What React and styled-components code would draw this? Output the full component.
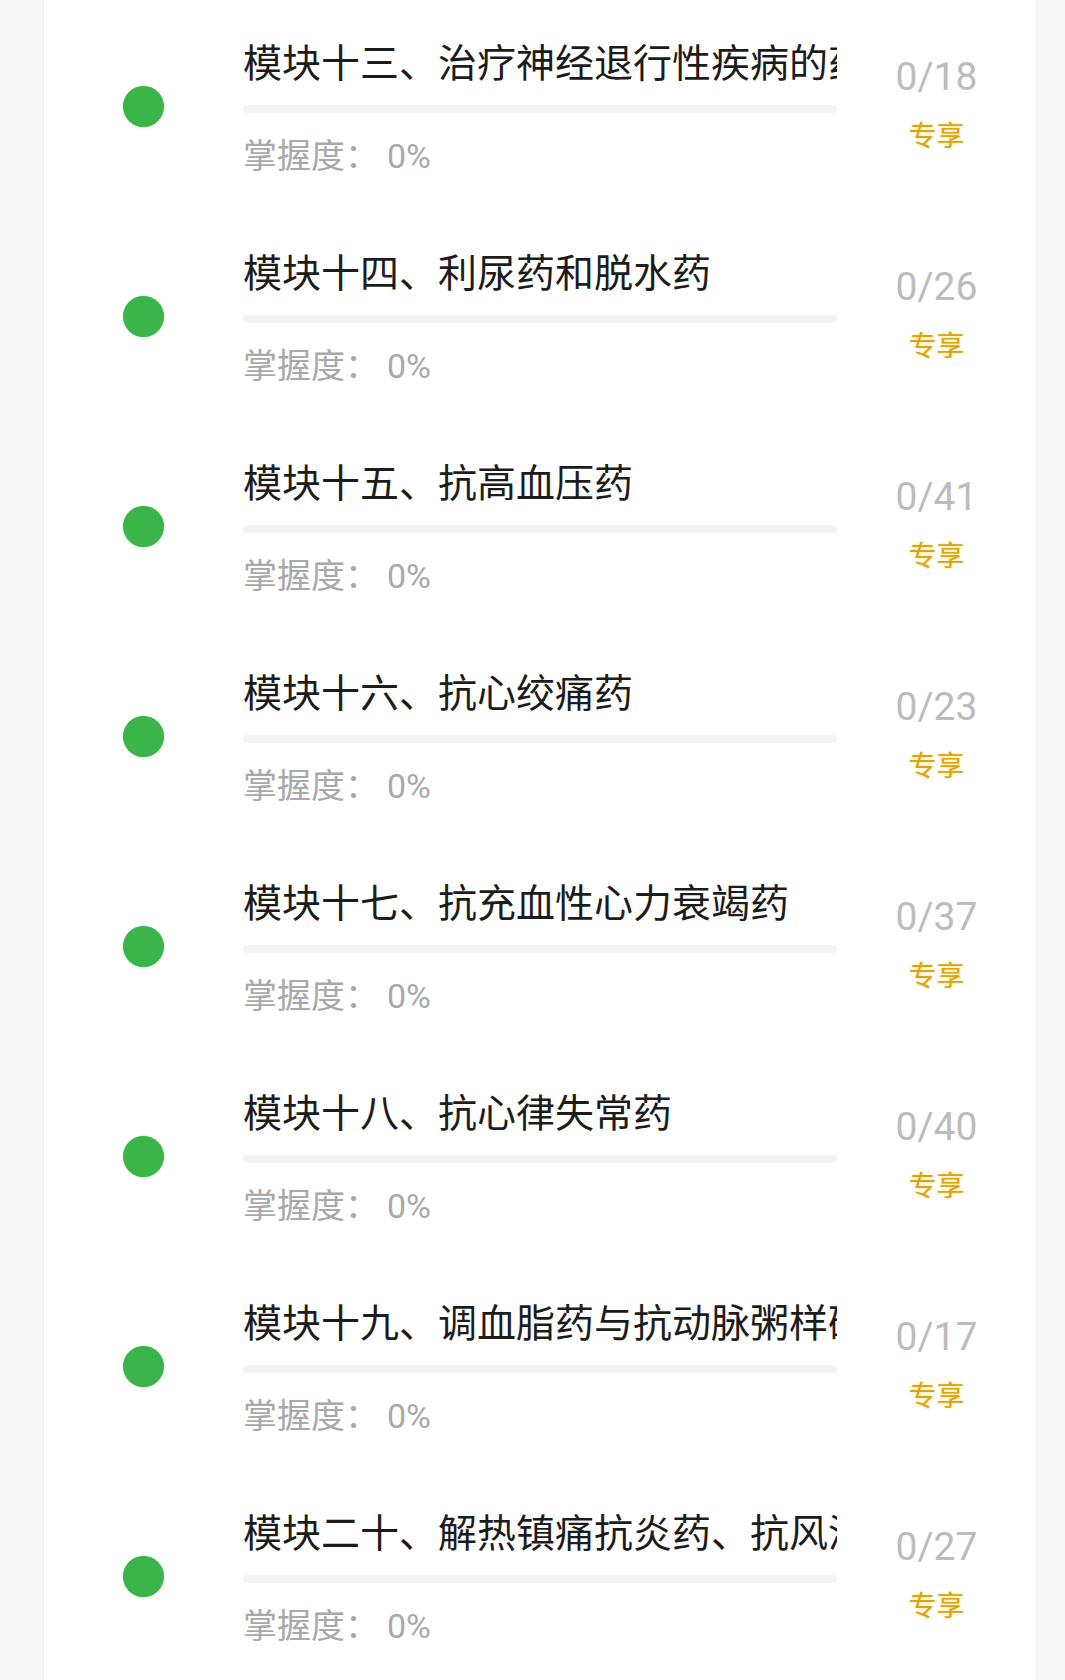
import React from 'react';
import styled, { createGlobalStyle } from 'styled-components';

const GlobalStyle = createGlobalStyle`
  html, body {
    margin: 0;
    padding: 0;
    background: #f8f8f8;
  }
  body {
    font-family: "Roboto", "Noto Sans CJK SC", sans-serif;
    overflow: hidden;
  }
`;

const Page = styled.div`
  height: 1680px;
  overflow: hidden;
`;

const Card = styled.div`
  margin-left: 44px;
  width: 992px;
  min-height: 1680px;
  background: #fff;
  box-shadow: -2px 0 3px rgba(0, 0, 0, 0.035), 2px 0 3px rgba(0, 0, 0, 0.02);
  padding-top: 1px;
  box-sizing: border-box;
`;

const Row = styled.div`
  display: grid;
  grid-template-columns: 41px 594px 1fr;
  column-gap: 79px;
  padding-left: 79px;
  height: 210px;
`;

const Dot = styled.span`
  align-self: center;
  width: 41px;
  height: 41px;
  border-radius: 50%;
  background: #3bb54a;
  box-shadow: 0 0 1px #5fd36a;
`;

const Content = styled.div`
  display: flex;
  flex-direction: column;
  padding-top: 40px;
  min-width: 0;
`;

const Title = styled.div`
  font-size: 39px;
  line-height: 46px;
  color: #1c1c1c;
  white-space: nowrap;
  overflow: hidden;
`;

const Bar = styled.div`
  margin-top: 18px;
  height: 8px;
  border-radius: 4px;
  background: #f4f4f4;
  overflow: hidden;
`;

const Fill = styled.div`
  height: 100%;
  background: #3bb54a;
`;

const Mastery = styled.div`
  margin-top: 24px;
  font-size: 34px;
  line-height: 38px;
  color: #a9a9a9;
  white-space: nowrap;
`;

const Percent = styled.span`
  margin-left: 8px;
`;

const Side = styled.div`
  display: flex;
  flex-direction: column;
  align-items: center;
  padding-top: 53px;
  margin-left: -79px;
`;

const Count = styled.div`
  font-size: 39px;
  line-height: 46px;
  color: #bcbcbc;
`;

const Tag = styled.div`
  margin-top: 20px;
  font-size: 28px;
  line-height: 34px;
  color: #d9a41a;
  text-shadow: 0 0 3px #ffe680, 0 0 1px #fff2b0;
`;

const modules = [
  { title: '模块十三、治疗神经退行性疾病的药物', done: 0, total: 18 },
  { title: '模块十四、利尿药和脱水药', done: 0, total: 26 },
  { title: '模块十五、抗高血压药', done: 0, total: 41 },
  { title: '模块十六、抗心绞痛药', done: 0, total: 23 },
  { title: '模块十七、抗充血性心力衰竭药', done: 0, total: 37 },
  { title: '模块十八、抗心律失常药', done: 0, total: 40 },
  { title: '模块十九、调血脂药与抗动脉粥样硬化药', done: 0, total: 17 },
  { title: '模块二十、解热镇痛抗炎药、抗风湿药', done: 0, total: 27 },
];

export default function App() {
  return (
    <Page>
      <GlobalStyle />
      <Card>
        {modules.map((m) => {
          const pct = Math.round((m.done / m.total) * 100);
          return (
            <Row key={m.title}>
              <Dot />
              <Content>
                <Title>{m.title}</Title>
                <Bar>
                  <Fill style={{ width: `${pct}%` }} />
                </Bar>
                <Mastery>
                  掌握度：<Percent>{pct}%</Percent>
                </Mastery>
              </Content>
              <Side>
                <Count>
                  {m.done}/{m.total}
                </Count>
                <Tag>专享</Tag>
              </Side>
            </Row>
          );
        })}
      </Card>
    </Page>
  );
}
